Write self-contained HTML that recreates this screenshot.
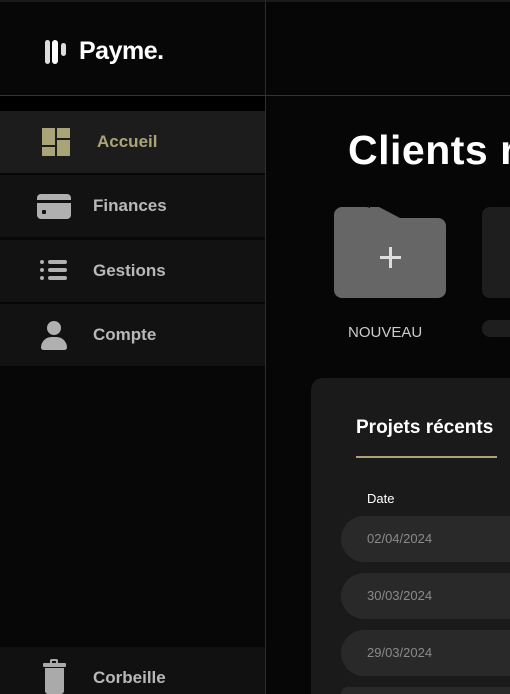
<!DOCTYPE html><html style="overflow:hidden;width:510px;height:694px"><head><style>
*{margin:0;padding:0;box-sizing:border-box}
body{width:510px;height:694px;overflow:hidden;background:#060606;font-family:"Liberation Sans",sans-serif;position:relative}
.a{position:absolute}
.side{left:0;top:0;width:265px;height:694px;background:#070707}
.item{position:absolute;left:0;width:265px;height:62px;background:#121212}
.item span{position:absolute;left:93px;top:0;line-height:62px;font-size:17px;font-weight:bold;color:#b8b8b8}
.row{position:absolute;left:341px;width:169px;height:46px;background:#292929;border-radius:23px 0 0 23px;color:#8a8a8a;font-size:13px;line-height:46px;padding-left:26px}
</style></head><body>
<div class="a side"></div>
<div class="a" style="left:0;top:0;width:510px;height:2px;background:#1a1a1a"></div>
<div class="a" style="left:0;top:95px;width:510px;height:1px;background:#333"></div>
<div class="a" style="left:0;top:96px;width:265px;height:15px;background:#000"></div>
<div class="a" style="left:265px;top:0;width:1px;height:694px;background:#2e2e2e"></div>
<div class="a" style="left:45px;top:40px;width:5px;height:24px;background:#ddd;border-radius:3px"></div>
<div class="a" style="left:52px;top:40px;width:6px;height:24px;background:#fff;border-radius:3px"></div>
<div class="a" style="left:61px;top:43px;width:5px;height:13px;background:#ddd;border-radius:3px"></div>
<div class="a" style="left:79px;top:37px;font-size:25px;font-weight:bold;color:#fff;letter-spacing:-0.5px">Payme.</div>
<div class="item" style="top:111px;background:#1c1c1c"><span style="left:97px;color:#aaa478">Accueil</span>
<div class="a" style="left:42px;top:17px;width:13px;height:17px;background:#a9a478"></div>
<div class="a" style="left:57px;top:17px;width:13px;height:10px;background:#a9a478"></div>
<div class="a" style="left:42px;top:36px;width:13px;height:9px;background:#a9a478"></div>
<div class="a" style="left:57px;top:29px;width:13px;height:16px;background:#a9a478"></div></div>
<div class="item" style="top:175px"><span>Finances</span>
<div class="a" style="left:37px;top:19px;width:34px;height:25px;background:#b0b0b0;border-radius:4px"></div>
<div class="a" style="left:37px;top:25px;width:34px;height:3px;background:#121212"></div>
<div class="a" style="left:42px;top:35px;width:4px;height:4px;background:#121212;border-radius:1px"></div></div>
<div class="item" style="top:240px"><span>Gestions</span>
<div class="a" style="left:40px;top:20px;width:4px;height:4px;background:#b0b0b0;border-radius:2px;box-shadow:0 8px #b0b0b0,0 16px #b0b0b0"></div>
<div class="a" style="left:48px;top:20px;width:19px;height:4px;background:#b0b0b0;border-radius:2px;box-shadow:0 8px #b0b0b0,0 16px #b0b0b0"></div></div>
<div class="item" style="top:304px"><span>Compte</span>
<div class="a" style="left:47px;top:17px;width:14px;height:14px;background:#b0b0b0;border-radius:50%"></div>
<div class="a" style="left:41px;top:33px;width:26px;height:13px;background:#b0b0b0;border-radius:13px 13px 3px 3px"></div></div>
<div class="item" style="top:647px;height:47px;background:#111"><span style="line-height:62px">Corbeille</span>
<div class="a" style="left:50px;top:12px;width:8px;height:5px;border:2px solid #aaa;border-bottom:none;border-radius:2px 2px 0 0"></div>
<div class="a" style="left:43px;top:16px;width:23px;height:4px;background:#aaa;border-radius:1px"></div>
<div class="a" style="left:45px;top:21px;width:19px;height:26px;background:#aaa;border-radius:0 0 3px 3px"></div></div>
<div class="a" style="left:311px;top:378px;width:199px;height:316px;background:#1a1a1a;border-radius:12px 0 0 0"></div>
<div class="a" style="left:348px;top:127px;width:162px;overflow:hidden;font-size:41px;font-weight:bold;color:#fff;white-space:nowrap;letter-spacing:0.5px">Clients récents</div>
<div class="a" style="left:334px;top:207px;width:40px;height:20px;background:#666;border-radius:8px 8px 0 0"></div>
<div class="a" style="left:334px;top:218px;width:112px;height:80px;background:#666;border-radius:8px"></div>
<div class="a" style="left:370px;top:207px;width:30px;height:11px;background:#666;clip-path:polygon(0 0,30% 0,100% 100%,0 100%)"></div>
<div class="a" style="left:380px;top:256px;width:21px;height:3px;background:#ddd"></div>
<div class="a" style="left:389px;top:247px;width:3px;height:21px;background:#ddd"></div>
<div class="a" style="left:482px;top:207px;width:28px;height:91px;background:#1e1e1e;border-radius:8px 0 0 8px"></div>
<div class="a" style="left:348px;top:324px;font-size:15px;color:#ccc">NOUVEAU</div>
<div class="a" style="left:482px;top:320px;width:28px;height:17px;background:#1e1e1e;border-radius:8px 0 0 8px"></div>
<div class="a" style="left:356px;top:417px;font-size:19px;font-weight:bold;color:#fff">Projets récents</div>
<div class="a" style="left:356px;top:456px;width:141px;height:2px;background:#a9a27a"></div>
<div class="a" style="left:367px;top:491px;font-size:13px;color:#fff">Date</div>
<div class="row" style="top:516px">02/04/2024</div>
<div class="row" style="top:573px">30/03/2024</div>
<div class="row" style="top:630px">29/03/2024</div>
<div class="row" style="top:687px;height:7px;border-radius:7px 0 0 0"></div>
</body></html>
